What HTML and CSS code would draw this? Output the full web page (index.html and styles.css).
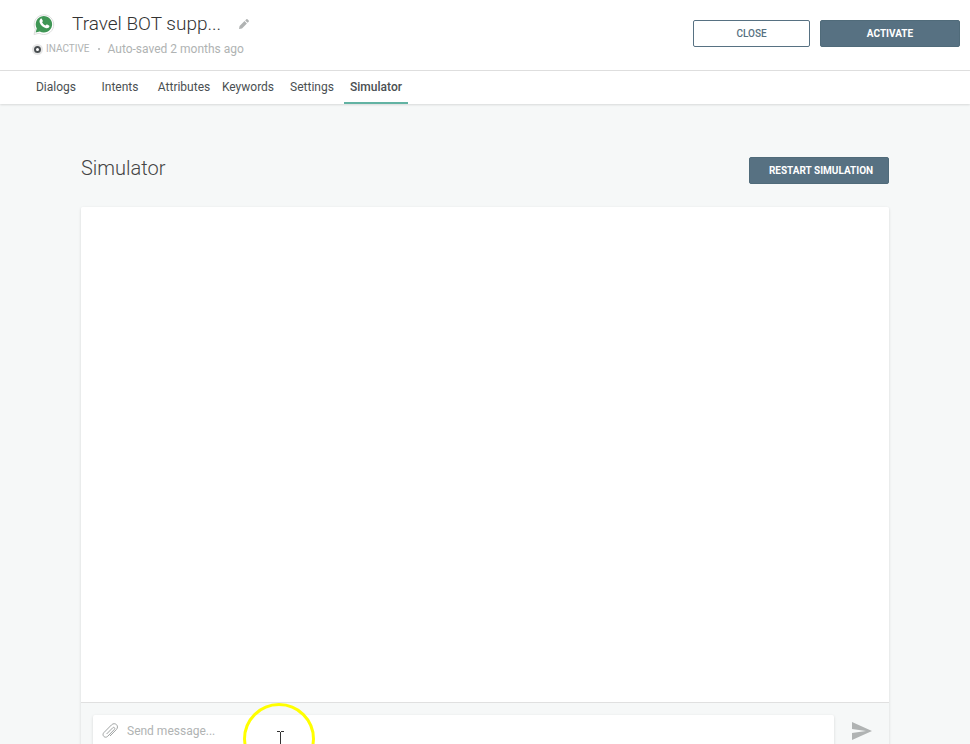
FILE: index.html
```html
<!DOCTYPE html>
<html lang="en">
<head>
  <meta charset="UTF-8">
  <meta name="viewport" content="width=device-width, initial-scale=1.0">
  <title>Travel BOT support - Simulator</title>
  <link rel="stylesheet" href="styles.css">
</head>
<body>
  <header class="header">
    <div class="bot">
      <div class="bot-title">
        <svg class="whatsapp" viewBox="0 0 22 22" aria-hidden="true">
          <path class="logo-edge" d="M1 21.500l1.400-5A9.800 9.800 0 1 1 6.100 20.200z"/>
          <path class="logo-fill" d="M2.600 19.500l1.200-4.100A8.200 8.200 0 1 1 6.800 18.400z"/>
          <path class="logo-phone" d="M7.600 5.800c.5-.5 1-.4 1.300.1l.9 1.900c.2.500-.1.900-.7 1.500.8 1.600 1.900 2.600 3.500 3.300.8-1 1.100-1.200 1.600-1l1.800.9c.5.300.5.600.4 1.100-.4 1.400-1.800 2-3.300 1.600-3.200-.8-5.700-3.200-6.500-6-.3-1.400.2-2.600 1-3.400z"/>
        </svg>
        <h1 class="bot-name">Travel BOT supp...</h1>
        <button class="icon-button edit" type="button" aria-label="Edit name">
          <svg width="10" height="10" viewBox="0 0 10 10">
            <path d="M0 10l.6-3L5.500 2.100l2.400 2.400L3 9.400zM6.200 1.400L7.300.300q.6-.5 1.200 0l1.200 1.200q.5.600 0 1.200L8.600 3.800z"/>
          </svg>
        </button>
      </div>
      <div class="bot-status">
        <span class="status-dot"></span>
        <span class="status-name">INACTIVE</span>
        <span class="separator"></span>
        <span>Auto-saved 2 months ago</span>
      </div>
    </div>
    <div class="actions">
      <button class="button button-outline" type="button">CLOSE</button>
      <button class="button" type="button">ACTIVATE</button>
    </div>
  </header>

  <nav class="tabs">
    <a class="tab" href="#dialogs">Dialogs</a>
    <a class="tab" href="#intents">Intents</a>
    <a class="tab" href="#attributes">Attributes</a>
    <a class="tab" href="#keywords">Keywords</a>
    <a class="tab" href="#settings">Settings</a>
    <a class="tab active" href="#simulator" aria-current="page">Simulator</a>
  </nav>

  <main class="content">
    <div class="content-head">
      <h2 class="content-title">Simulator</h2>
      <button class="button restart" type="button">RESTART SIMULATION</button>
    </div>
    <section class="chat">
      <div class="messages"></div>
      <form class="composer">
        <div class="message-box">
          <button class="icon-button" type="button" aria-label="Attach file">
            <svg width="16" height="16" viewBox="0 0 16 16">
              <path class="clip" d="M4.600 11l6.100-6.200c1.200-1.200 2.900.4 1.700 1.600l-6.700 6.900c-2.600 2.600-6.400-1-3.800-3.700l7.600-7.700c3.500-3.400 8.200 1.200 4.800 4.700l-6.300 6.400"/>
            </svg>
          </button>
          <input class="message-input" type="text" placeholder="Send message..." aria-label="Send message">
        </div>
        <button class="icon-button send" type="submit" aria-label="Send">
          <svg width="20" height="18" viewBox="0 0 20 18">
            <path d="M0 0l20 9L0 18v-7l14-2L0 7z"/>
          </svg>
        </button>
      </form>
    </section>
  </main>

  <svg class="pointer" width="72" height="72" viewBox="0 0 72 72" aria-hidden="true">
    <circle class="pointer-ring" cx="36" cy="36" r="34.500"/>
    <path class="pointer-beam" d="M34 28.500h3M38 28.500h3M37.500 29v14M34 43.500h3M38 43.500h3"/>
  </svg>
</body>
</html>
```
FILE: styles.css
```css
html {
  scrollbar-width: none;
}

body {
  margin: 0;
  background-color: #f6f8f8;
  color: #4a4f52;
  font-family: Roboto, sans-serif;
  font-size: 12px;
  line-height: 16px;
}

button,
input {
  font-family: inherit;
}

.header {
  display: flex;
  justify-content: space-between;
  align-items: flex-start;
  height: 70px;
  padding: 0 10px 0 33px;
  background-color: #fff;
  border-bottom: 1px solid #e0e0e0;
}

.bot {
  padding-top: 11px;
}

.bot-title {
  display: flex;
  align-items: center;
}

.whatsapp {
  width: 22px;
  height: 22px;
}

.logo-edge {
  fill: #fff;
  stroke: #dcdcdc;
}

.logo-fill {
  fill: #3f9655;
}

.logo-phone {
  fill: #fff;
}

.bot-name {
  margin: 0 18px 0 17px;
  color: #333;
  font-size: 19px;
  font-weight: 300;
  line-height: 26px;
}

.icon-button {
  display: flex;
  padding: 0;
  border: 0;
  background: none;
  fill: #b0b3b3;
  cursor: pointer;
}

.bot-status {
  display: flex;
  align-items: center;
  margin-top: 4px;
  color: #b0b3b3;
}

.status-dot {
  box-sizing: border-box;
  width: 7px;
  height: 7px;
  margin: 0 5px 0 1px;
  border: 2px solid #4a4f52;
  border-radius: 50%;
  box-shadow: 0 0 0 2px #e6e6e6;
}

.status-name {
  font-size: 10px;
}

.separator {
  width: 2px;
  height: 2px;
  margin: 0 8px;
  border-radius: 50%;
  background-color: #b0b3b3;
}

.actions {
  display: flex;
  gap: 10px;
  padding-top: 20px;
}

.button {
  width: 140px;
  height: 27px;
  padding: 0;
  border: 1px solid #506b7a;
  border-radius: 2px;
  background-color: #577182;
  color: #fff;
  font-size: 10px;
  font-weight: 700;
  cursor: pointer;
}

.button-outline {
  width: 117px;
  border-color: #577182;
  background-color: #fff;
  color: #577182;
  font-weight: 500;
}

.restart {
  padding-left: 4px;
}

.tabs {
  display: flex;
  height: 33px;
  padding: 0 24px;
  background-color: #fff;
  box-shadow: 0 1px 2px rgba(0, 0, 0, 0.12);
}

.tab {
  box-sizing: border-box;
  width: 64px;
  padding-top: 8px;
  border-bottom: 2px solid transparent;
  color: #4a4f52;
  text-align: center;
  text-decoration: none;
}

.tab.active {
  border-color: #62b3a3;
  font-weight: 500;
}

.content {
  padding: 53px 81px 0;
}

.content-head {
  display: flex;
  justify-content: space-between;
  align-items: flex-start;
  margin-bottom: 23px;
}

.content-title {
  margin: 0;
  color: #444;
  font-size: 20px;
  font-weight: 300;
  line-height: 22px;
}

.chat {
  border-radius: 2px;
  box-shadow: 0 1px 3px rgba(0, 0, 0, 0.14);
}

.messages {
  height: calc(100vh - 249px);
  min-height: 200px;
  border-radius: 2px 2px 0 0;
  background-color: #fff;
}

.composer {
  display: flex;
  align-items: center;
  padding: 12px 17px 12px 12px;
  border-top: 1px solid #e0e0e0;
}

.message-box {
  display: flex;
  flex: 1;
  align-items: center;
  gap: 9px;
  height: 32px;
  padding: 0 9px;
  border-radius: 2px;
  background-color: #fff;
  box-shadow: 0 1px 3px rgba(0, 0, 0, 0.14);
}

.clip {
  fill: none;
  stroke: #a0a3a3;
}

.message-input {
  flex: 1;
  padding: 0;
  border: 0;
  outline: 0;
  background: none;
  color: #4a4f52;
  font-size: 12px;
}

.message-input::placeholder {
  color: #b0b3b3;
}

.send {
  margin-left: 18px;
}

/* mouse pointer with its highlight ring */
.pointer {
  position: fixed;
  left: 243px;
  bottom: -31px;
  pointer-events: none;
}

.pointer-ring {
  fill: none;
  stroke: #ff0;
  stroke-width: 3px;
}

.pointer-beam {
  fill: none;
  stroke: #333;
}
```
